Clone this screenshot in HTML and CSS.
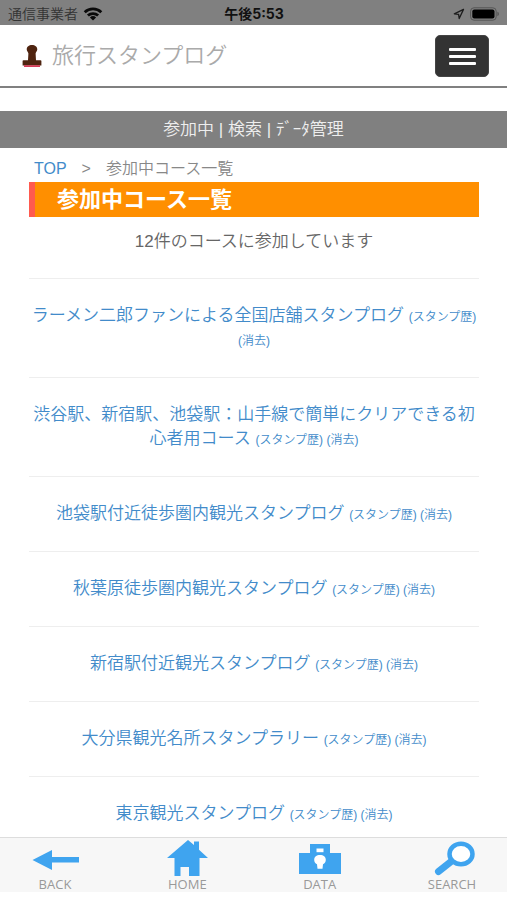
FILE: index.html
```html
<!DOCTYPE html>
<html lang="ja">
<head>
<meta charset="utf-8">
<meta name="viewport" content="width=device-width, initial-scale=1">
<title>旅行スタンプログ</title>
<link rel="stylesheet" href="styles.css">
</head>
<body>
<div class="status">
  <div class="status-side">
    <span class="carrier">通信事業者</span>
    <svg width="20" height="14" viewBox="0 0 20 14" aria-hidden="true"><g fill="none" stroke="#0a0a0a" stroke-width="2.8"><path d="M1.7 5.3a12 12 0 0 1 16.6 0"/><path d="M4.9 8.6a7.4 7.4 0 0 1 10.2 0"/></g><path d="M10 13.6 6.9 10.5a4.5 4.5 0 0 1 6.2 0z" fill="#0a0a0a"/></svg>
  </div>
  <span class="time">午後5:53</span>
  <div class="status-side status-right">
    <svg width="12" height="12" viewBox="0 0 12 12" aria-hidden="true"><path d="M10.5 1.4 1.3 5.8l4.3.5.6 4.2z" fill="none" stroke="#1c1c1c" stroke-width="1.3" stroke-linejoin="round"/></svg>
    <svg width="30" height="14" viewBox="0 0 30 14" aria-hidden="true"><rect x=".6" y=".8" width="25.6" height="12.4" rx="3.4" fill="none" stroke="#555" stroke-width="1"/><rect x="2.3" y="2.5" width="22.2" height="9" rx="2" fill="#000"/><path d="M27.4 4.8c2 .6 2 3.8 0 4.4z" fill="#555"/></svg>
  </div>
</div>
<header class="header">
  <a class="brand" href="#">
    <svg width="20" height="24" viewBox="0 0 20 24" aria-hidden="true"><path d="M10 1c3 0 5.300 1.800 5.300 4.300 0 1.900-1.500 2.800-1.700 4.200l.4 6.700h4.500c.6 0 .9.300.9.900v4.400H.6v-4.400c0-.6.3-.9.9-.9H6l.4-6.700C6.200 8.100 4.700 7.200 4.700 5.300 4.700 2.800 7 1 10 1z" fill="#4f2410"/><path d="M2 21.200h16v1.800H2z" fill="#d63c58"/></svg>
    <span>旅行スタンプログ</span>
  </a>
  <button class="menu" type="button" aria-label="メニュー"><span class="bar"></span><span class="bar"></span><span class="bar"></span></button>
</header>
<nav class="subnav"><a href="#">参加中</a> | <a href="#">検索</a> | <a href="#">ﾃﾞｰﾀ管理</a></nav>
<main class="main">
  <div class="crumbs"><a href="#">TOP</a><span>&gt;</span><span>参加中コース一覧</span></div>
  <h1 class="heading">参加中コース一覧</h1>
  <p class="count">12件のコースに参加しています</p>
  <ul class="courses">
    <li><a href="#">ラーメン二郎ファンによる全国店舗スタンプログ</a> <span class="sub"><a href="#">(スタンプ歴)</a> <a href="#">(消去)</a></span></li>
    <li><a href="#">渋谷駅、新宿駅、池袋駅：山手線で簡単にクリアできる初心者用コース</a> <span class="sub"><a href="#">(スタンプ歴)</a> <a href="#">(消去)</a></span></li>
    <li><a href="#">池袋駅付近徒歩圏内観光スタンプログ</a> <span class="sub"><a href="#">(スタンプ歴)</a> <a href="#">(消去)</a></span></li>
    <li><a href="#">秋葉原徒歩圏内観光スタンプログ</a> <span class="sub"><a href="#">(スタンプ歴)</a> <a href="#">(消去)</a></span></li>
    <li><a href="#">新宿駅付近観光スタンプログ</a> <span class="sub"><a href="#">(スタンプ歴)</a> <a href="#">(消去)</a></span></li>
    <li><a href="#">大分県観光名所スタンプラリー</a> <span class="sub"><a href="#">(スタンプ歴)</a> <a href="#">(消去)</a></span></li>
    <li><a href="#">東京観光スタンプログ</a> <span class="sub"><a href="#">(スタンプ歴)</a> <a href="#">(消去)</a></span></li>
  </ul>
</main>
<nav class="tabs">
  <a href="#"><svg width="48" height="38" viewBox="0 0 48 38" aria-hidden="true"><path d="M1.500 22 21 12v7h27v5.500H21V32z" fill="#3fa4ef"/></svg><span>BACK</span></a>
  <a href="#"><svg width="48" height="38" viewBox="0 0 48 38" aria-hidden="true"><path d="M4 20 25 2l6 5V3.500h5v8.200l9 8.300h-8.500v18H26v-9h-8.500v9H11.500V20z" fill="#3fa4ef"/></svg><span>HOME</span></a>
  <a href="#"><svg width="48" height="38" viewBox="0 0 48 38" aria-hidden="true"><path d="M3 15h11V6h20v9h11v21H3z" fill="#3fa4ef"/><path d="M20.500 10.500h7v3.700h-7z" fill="#fff"/><path d="M24 17c3.500 0 5.800 2 5.800 4.700 0 2-1 3.500-2.800 4.500l-.5 4.600h-5l-.5-4.600c-1.800-1-2.800-2.500-2.800-4.500C18.200 19 20.500 17 24 17z" fill="#fff"/></svg><span>DATA</span></a>
  <a href="#"><svg width="48" height="38" viewBox="0 0 48 38" aria-hidden="true"><path d="M22.500 24 10.500 33.500" stroke="#3fa4ef" stroke-width="7" stroke-linecap="round"/><ellipse cx="33" cy="16" rx="11.500" ry="10.300" fill="#fff" stroke="#3fa4ef" stroke-width="4.500"/></svg><span>SEARCH</span></a>
</nav>
</body>
</html>
```
FILE: styles.css
```css
* { box-sizing: border-box; }

body {
  margin: 0;
  height: 100vh;
  display: flex;
  flex-direction: column;
  overflow: hidden;
  background: #fff;
  color: #666;
  font-family: "Liberation Sans", "Noto Sans CJK JP", sans-serif;
  font-weight: 350;
  font-size: 17px;
  line-height: 24px;
}

a { color: #428bca; text-decoration: none; }

.status {
  flex: none;
  height: 25px;
  padding: 2px 7px 0 8px;
  display: flex;
  align-items: center;
  background: #808080;
  color: #111;
  font-size: 14px;
}
.status-side { flex: 1; display: flex; align-items: center; gap: 5px; }
.status-right { justify-content: flex-end; }
.carrier { color: #333; }
.time { font-family: Inter, "Noto Sans CJK JP", sans-serif; font-size: 14px; font-weight: 700; }

.header {
  flex: none;
  height: 63px;
  padding: 1px 18px 0 22px;
  display: flex;
  align-items: center;
  justify-content: space-between;
  border-bottom: 2px solid #808080;
}
.brand { display: flex; align-items: center; gap: 10px; color: #aaa; font-size: 22px; }
.menu {
  width: 54px;
  height: 42px;
  padding: 0;
  display: flex;
  flex-direction: column;
  align-items: center;
  justify-content: center;
  gap: 4px;
  border: 1px solid #444;
  border-radius: 5px;
  background: #333;
}
.bar { width: 27px; height: 3px; border-radius: 1px; background: #fff; }

.subnav {
  flex: none;
  margin-top: 23px;
  padding: 7px 0 6px;
  background: #808080;
  color: #eee;
  text-align: center;
}
.subnav a { color: #eee; }

.main { flex: 1; min-height: 0; overflow: hidden; padding: 9px 28px 0 29px; }
.crumbs { padding-left: 5px; display: flex; gap: 15px; color: #888; font-size: 16px; }
.heading {
  margin: 1px 0 0;
  padding: 6px 0 5px 22px;
  border-left: 6px solid #ff5a4f;
  background: #ff8f00;
  color: #fff;
  font-size: 22px;
  line-height: 24px;
}
.count { margin: 13px 0 24px; text-align: center; }
.courses { margin: 0; padding: 0; list-style: none; text-align: center; }
.courses li { padding: 25px 0; border-top: 1px solid #eee; }
.sub { font-size: 12px; line-height: 16px; }

.tabs {
  flex: none;
  height: 55px;
  margin-bottom: 8px;
  padding: 0 31px;
  display: flex;
  justify-content: space-between;
  border-top: 1px solid #ddd;
  background: #f7f7f7;
}
.tabs a {
  width: 48px;
  display: flex;
  flex-direction: column;
  align-items: center;
  color: #999;
  font-family: "Open Sans", sans-serif;
  font-size: 13px;
  font-weight: 400;
  line-height: 16px;
}
.tabs svg { flex: none; }
```
